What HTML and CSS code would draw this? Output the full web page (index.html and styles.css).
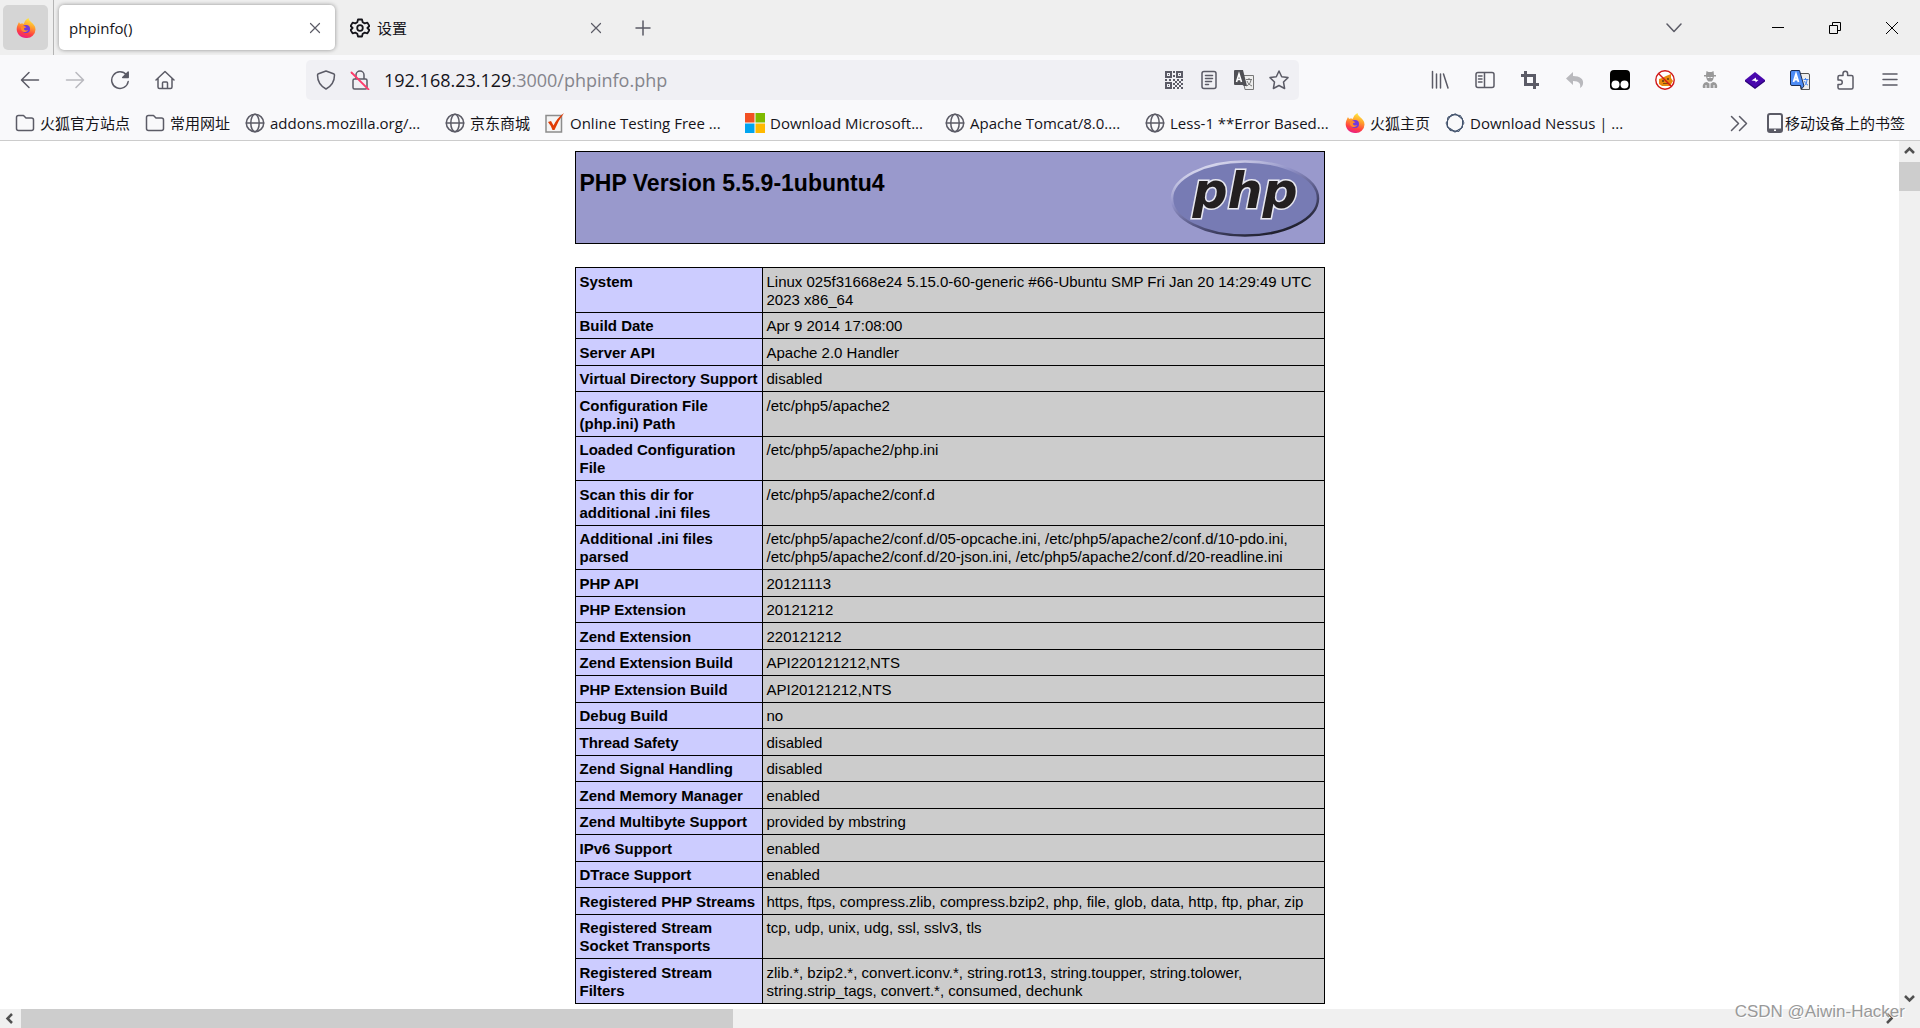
FILE: index.html
```html
<!DOCTYPE html>
<html lang="zh-CN">
<head>
<meta charset="utf-8">
<title>phpinfo()</title>
<link rel="stylesheet" href="styles.css">
</head>
<body>
<svg class="defs" aria-hidden="true">
  <defs>
    <linearGradient id="ff" x1="0.7" y1="0" x2="0.4" y2="1"><stop offset="0" stop-color="#fff044"/><stop offset=".4" stop-color="#ffa02c"/><stop offset=".75" stop-color="#ff4040"/><stop offset="1" stop-color="#e91d87"/></linearGradient>
    <linearGradient id="rim" x1="0.2" y1="0" x2="0.8" y2="1"><stop offset="0" stop-color="#e4e4f4"/><stop offset=".35" stop-color="#8f90c6"/><stop offset=".65" stop-color="#50517c"/><stop offset="1" stop-color="#15151c"/></linearGradient>
    <symbol id="firefox" viewBox="0 0 20 20"><path fill="url(#ff)" d="M12.500 0c.2 2 1.300 2.800 2.500 3.900 2.400 2 4.500 3.800 4.500 7.600A9 8.500 0 0 1 10 20C4.700 20 1 16 .7 11.500.6 8.500 1.800 6.500 3 4c.5 1 .8 1.500 1.500 2 .9-.7 2.500-.5 3.300 0 .7-2.400 2-4.600 4.700-6z"/><circle cx="10" cy="11" r="4" fill="#7139dc"/><path fill="#ff8a2a" d="M5 8.500c1.800-1 4.500-.7 5.500 1-2-.1-2.500.8-2.500 1.700 1 1.500 2.500 1.500 4 .8-1 2.500-4.800 2.700-6.300.5-.8-1.200-1-2.700-.7-4z"/></symbol>
    <symbol id="close" viewBox="0 0 12 12"><path d="M1.500 1.500l9 9M10.500 1.500l-9 9"/></symbol>
    <symbol id="folder" viewBox="0 0 20 20"><path d="M1.500 4.500v11q0 2 2 2h13q2 0 2-2V7q0-2-2-2h-5.500L8.500 2.500h-5q-2 0-2 2z"/></symbol>
    <symbol id="globe" viewBox="0 0 20 20"><circle cx="10" cy="10" r="8.700"/><ellipse cx="10" cy="10" rx="4.200" ry="8.700"/><path d="M1.300 10h17.400"/></symbol>
    <symbol id="back" viewBox="0 0 20 20"><path d="M18.500 10H2M9 2.500L1.500 10 9 17.500"/></symbol>
  </defs>
</svg>

<header class="chrome">
  <div class="tabs">
    <div class="pinbox"><button class="pinned" aria-label="Firefox"><svg class="i20"><use href="#firefox"/></svg></button></div>
    <div class="tab active"><span>phpinfo()</span><button class="x" aria-label="关闭"><svg class="i12 line thin"><use href="#close"/></svg></button></div>
    <div class="tab"><svg class="i20 gear" viewBox="0 0 20 20"><path d="M8 1.500h4l.7 2.800 2 1.100 2.700-.8 2 3.400-2 2 2 2-2 3.400-2.700-.8-2 1.100L12 18.500H8l-.7-2.800-2-1.100-2.700.8-2-3.400 2-2-2-2 2-3.400 2.700.8 2-1.100z"/><circle cx="10" cy="10" r="2.800"/></svg><span>设置</span><button class="x" aria-label="关闭"><svg class="i12 line thin"><use href="#close"/></svg></button></div>
    <button class="newtab" aria-label="新建标签页"><svg class="i16 line" viewBox="0 0 16 16"><path d="M8 1v14M1 8h14"/></svg></button>
    <div class="window">
      <button class="all" aria-label="列出所有标签页"><svg class="i16 line" viewBox="0 0 16 16"><path d="M1 4l7 7.500L15 4"/></svg></button>
      <button aria-label="最小化"><svg class="i12 sys" viewBox="0 0 12 12"><path d="M0 5.500h12"/></svg></button>
      <button aria-label="还原"><svg class="i12 sys" viewBox="0 0 12 12"><path d="M.5 3.500h8v8h-8zM3.500 3V.5h8v8H9"/></svg></button>
      <button aria-label="关闭窗口"><svg class="i12 sys" viewBox="0 0 12 12"><path d="M0 0l12 12M12 0L0 12"/></svg></button>
    </div>
  </div>

  <nav class="nav">
    <div class="navbtns">
      <button aria-label="后退"><svg class="i20 line"><use href="#back"/></svg></button>
      <button class="off" aria-label="前进"><svg class="i20 line" viewBox="0 0 20 20"><path d="M1.500 10H18M11 2.500l7.500 7.500-7.500 7.500"/></svg></button>
      <button aria-label="刷新"><svg class="i20 line" viewBox="0 0 20 20"><path d="M16.500 5A8.300 8.300 0 1 0 18.200 11.500"/><path class="solid" d="M18.200 2v5.500h-5.500z"/></svg></button>
      <button aria-label="主页"><svg class="i20 line" viewBox="0 0 20 20"><path d="M1 10l9-8.500 9 8.500M3 8.500V17q0 1.500 1.500 1.500h11q1.500 0 1.500-1.500V8.500M7.500 18.500v-5.500q0-1 1-1h3q1 0 1 1v5.500"/></svg></button>
    </div>
    <div class="urlbar">
      <svg class="i20 line" viewBox="0 0 20 20"><path d="M10 1l7.500 2.700q1 .4 1 1.300c0 7-3 11-8.500 14C4.500 16 1.500 12 1.500 5q0-.9 1-1.300z"/></svg>
      <svg class="i20 line" viewBox="0 0 20 20"><path d="M4.500 9h11q1.500 0 1.500 1.500v7q0 1.500-1.500 1.500h-11Q3 19 3 17.500v-7Q3 9 4.500 9zM6 9V5a4 4 0 0 1 8 0v4"/><path class="slash" d="M1.500 2.500l17 17"/></svg>
      <p class="url"><b>192.168.23.129</b>:3000/phpinfo.php</p>
      <div class="urlicons">
        <svg class="i20" viewBox="0 0 20 20"><g fill="none" stroke="#5b5b66" stroke-width="2"><path d="M2 2h5v5H2zM13 2h5v5h-5zM2 13h5v5H2z"/></g><path fill="#5b5b66" d="M4 4h1v1H4zM15 4h1v1h-1zM4 15h1v1H4zM9 1h2v2H9zM9 5h2v2H9zM1 9h2v2H1zM5 9h2v2H5zM9 9h2v2H9zM13 9h2v2h-2zM17 9h2v2h-2zM11 11h2v2h-2zM15 11h2v2h-2zM9 13h2v2H9zM13 13h2v2h-2zM17 13h2v2h-2zM11 15h2v2h-2zM15 15h2v2h-2zM9 17h2v2H9zM13 17h2v2h-2zM17 17h2v2h-2z"/></svg>
        <svg class="i20 line" viewBox="0 0 20 20"><path d="M5 1.500h10q2 0 2 2v13q0 2-2 2H5q-2 0-2-2v-13q0-2 2-2zM6.500 5.500h7M6.500 8.500h7M6.500 11.500h6M6.500 14.500h3"/></svg>
        <svg class="i20" viewBox="0 0 20 20"><path fill="#eee" stroke="#777" d="M8 5.500h11.500v14H11z"/><path fill="#505055" d="M1 0h8l4 16-3 0-1.500-1H1q-1 0-1-1V1q0-1 1-1z"/><path fill="none" stroke="#fff" stroke-width="1.600" d="M2.500 12L5 4l2.500 8M3.500 9.500h3"/><path fill="none" stroke="#777" d="M12 9.500h6M15 8v1.500M17 10c-.5 3-2 5-4.500 6M13 11c1 2.500 2 3.500 5 5"/></svg>
        <svg class="i20 line" viewBox="0 0 20 20"><path d="M10 1l2.700 5.700 6.300.9-4.500 4.400 1.100 6.500L10 15.500l-5.600 3 1.100-6.500L1 7.600l6.300-.9z"/></svg>
      </div>
    </div>
    <div class="tools">
      <button aria-label="书库"><svg class="i20 line" viewBox="0 0 20 20"><path d="M2.500 1.500v16.500M6.500 4v14M10.500 4v14M13.500 4l4.500 14"/></svg></button>
      <button aria-label="侧栏"><svg class="i20 line" viewBox="0 0 20 20"><path d="M3 2.500h14q2 0 2 2v11q0 2-2 2H3q-2 0-2-2v-11q0-2 2-2zM9.500 2.500v15M3.500 6H7M3.500 9H7M3.500 12H7"/></svg></button>
      <button aria-label="截图"><svg class="i20" viewBox="0 0 20 20"><path fill="none" stroke="#5b5b66" stroke-width="3" d="M5.500 1v13.500H19M1 5.500h13.500V19"/></svg></button>
      <button aria-label="撤销"><svg class="i20" viewBox="0 0 20 20"><path fill="#b9b9bd" d="M8 2v4c7 0 11 3 10 8-.4 2-1.500 3-3 4 1-4-.5-7-7-7v4L1 8.500z"/></svg></button>
      <button aria-label="Tampermonkey"><svg class="i20" viewBox="0 0 20 20"><rect width="20" height="20" rx="4"/><circle cx="5.500" cy="14.500" r="4" fill="#fff"/><circle cx="14.500" cy="14.500" r="4" fill="#fff"/></svg></button>
      <button aria-label="拦截"><svg class="i20" viewBox="0 0 20 20"><circle cx="10" cy="10" r="9" fill="#fff"/><path fill="#e8890c" d="M4 9l3-1 4-2 5-2 0 4 2 3-3 5H7l-3-2z"/><path fill="#7d4c12" d="M7 10h2v2H7zM12 8h2v2h-2zM8 13h6v1H8z"/><circle cx="10" cy="10" r="9.200" fill="none" stroke="#d01818" stroke-width="1.400"/><path stroke="#d01818" stroke-width="1.400" d="M3.500 3.500l13 13"/></svg></button>
      <button aria-label="隐私"><svg class="i20" viewBox="0 0 20 20"><path fill="#999" d="M6.500 1l2 1h3l2-1 .5 4h2v1.500h-2L13 10l-1.500 1.500h-3L7 10 6 6.500H4V5h2zM3 18c-1-3 1-6 4-6l3 2 3-2c3 0 5 3 4 6z"/><path stroke="#fafafe" fill="none" d="M7.500 7.500h2M10.500 7.500h2M6 15v4M14 15v4M10 14v5"/></svg></button>
      <button aria-label="钻石"><svg class="i20" viewBox="0 0 20 20"><path fill="#2c0378" d="M0 10v1.500L10 19l10-7.500V10z"/><path fill="#4908ad" d="M10 2l10 8-10 7.500L0 10z"/><path fill="#fff" d="M6.500 10.500l4.500-3v2l2.500.5-3 2.500v-1.500z"/></svg></button>
      <button aria-label="翻译"><svg class="i20" viewBox="0 0 20 20"><path fill="#eee" stroke="#555" d="M9 3.500h9q1.500 0 1.500 1.500v14.500H11z"/><path fill="#4c8bf5" stroke="#1d2c50" d="M2 .5h7.500L14 16l-2.500 3-1-3.500H2Q.5 15.500.5 14V2Q.5.5 2 .5z"/><path fill="none" stroke="#fff" stroke-width="1.800" d="M3.500 12L6 4l2.500 8M4.500 9.500h3"/><path fill="none" stroke="#4285f4" d="M13.500 9.500h5M15.500 8v1.500M17 10c-.5 3-1 4-2 5M14.500 11c1 2.500 2 3.500 3.500 4"/></svg></button>
      <button aria-label="扩展"><svg class="i20 line" viewBox="0 0 20 20"><path d="M3 8.500V7q0-1.500 1.500-1.500H8V3.500a2.300 2.300 0 0 1 4.600 0v2h3.900q1.500 0 1.500 1.500v10.500q0 1.500-1.500 1.500h-12Q3 19 3 17.500V14.500h2a2 2 0 0 0 0-4.500H3z"/></svg></button>
      <button aria-label="菜单"><svg class="i20 line" viewBox="0 0 20 20"><path d="M3 4h14M3 9.500h14M3 15h14"/></svg></button>
    </div>
  </nav>

  <div class="marks">
    <a class="wide" href="#"><svg class="i20 line"><use href="#folder"/></svg>火狐官方站点</a>
    <a class="short" href="#"><svg class="i20 line"><use href="#folder"/></svg>常用网址</a>
    <a href="#"><svg class="i20 line"><use href="#globe"/></svg>addons.mozilla.org/...</a>
    <a class="short" href="#"><svg class="i20 line"><use href="#globe"/></svg>京东商城</a>
    <a href="#"><svg class="i20" viewBox="0 0 20 20"><path fill="#f4f4f4" stroke="#8c8c8c" stroke-width="1.500" d="M1 2.500h15.500v16.500H1z"/><path fill="#e03c06" d="M3 9l3-1 2.500 4.500Q12 5 19 0 13 8 9.500 17H7.500Q6 12.500 3 9z"/></svg>Online Testing Free ...</a>
    <a href="#"><svg class="i20" viewBox="0 0 20 20"><path fill="#f25022" d="M0 0h9.500v9.500H0z"/><path fill="#7fba00" d="M10.500 0H20v9.500h-9.500z"/><path fill="#00a4ef" d="M0 10.500h9.500V20H0z"/><path fill="#ffb900" d="M10.500 10.500H20V20h-9.500z"/></svg>Download Microsoft...</a>
    <a href="#"><svg class="i20 line"><use href="#globe"/></svg>Apache Tomcat/8.0....</a>
    <a href="#"><svg class="i20 line"><use href="#globe"/></svg>Less-1 **Error Based...</a>
    <a class="short" href="#"><svg class="i20"><use href="#firefox"/></svg>火狐主页</a>
    <a href="#"><svg class="i20" viewBox="0 0 20 20"><g fill="none" stroke="#44546e"><path d="M6.500 1.500l9 1L19 10l-5 8.500-9-1L1 10z"/><path d="M10 .8l7.500 4.500v9L10 19.200l-7.500-4.700v-9z"/><path d="M3 4l8-3 7 6-1 8-7 3.500-8-5z"/></g></svg>Download Nessus | ...</a>
    <button class="more" aria-label="更多书签"><svg class="i20 line" viewBox="0 0 20 20"><path d="M2.500 3.500l7 7-7 7M10.500 3.500l7 7-7 7"/></svg></button>
    <a class="mobile" href="#"><svg class="i20" viewBox="0 0 20 20"><path fill="none" stroke="#5b5b66" stroke-width="2" d="M5 1h10q2 0 2 2v14q0 2-2 2H5q-2 0-2-2V3q0-2 2-2z"/><path fill="#5b5b66" d="M3 15.500h14V19H3z"/><path fill="#fff" d="M9 16.500h2v1.500H9z"/></svg>移动设备上的书签</a>
  </div>
</header>

<div class="view">
  <main class="page">
    <section class="banner">
      <h1>PHP Version 5.5.9-1ubuntu4</h1>
      <svg class="logo" viewBox="0 0 150 80" role="img" aria-label="PHP"><ellipse cx="75" cy="38.500" rx="73" ry="37" fill="#777bb4" stroke="url(#rim)" stroke-width="2.500"/><text x="75" y="48" text-anchor="middle" class="logotext">php</text></svg>
    </section>
    <table class="info">
      <tr><th>System</th><td>Linux 025f31668e24 5.15.0-60-generic #66-Ubuntu SMP Fri Jan 20 14:29:49 UTC<br>2023 x86_64</td></tr>
      <tr><th>Build Date</th><td>Apr 9 2014 17:08:00</td></tr>
      <tr><th>Server API</th><td>Apache 2.0 Handler</td></tr>
      <tr><th>Virtual Directory Support</th><td>disabled</td></tr>
      <tr><th>Configuration File<br>(php.ini) Path</th><td>/etc/php5/apache2</td></tr>
      <tr><th>Loaded Configuration<br>File</th><td>/etc/php5/apache2/php.ini</td></tr>
      <tr><th>Scan this dir for<br>additional .ini files</th><td>/etc/php5/apache2/conf.d</td></tr>
      <tr><th>Additional .ini files<br>parsed</th><td>/etc/php5/apache2/conf.d/05-opcache.ini, /etc/php5/apache2/conf.d/10-pdo.ini,<br>/etc/php5/apache2/conf.d/20-json.ini, /etc/php5/apache2/conf.d/20-readline.ini</td></tr>
      <tr><th>PHP API</th><td>20121113</td></tr>
      <tr><th>PHP Extension</th><td>20121212</td></tr>
      <tr><th>Zend Extension</th><td>220121212</td></tr>
      <tr><th>Zend Extension Build</th><td>API220121212,NTS</td></tr>
      <tr><th>PHP Extension Build</th><td>API20121212,NTS</td></tr>
      <tr><th>Debug Build</th><td>no</td></tr>
      <tr><th>Thread Safety</th><td>disabled</td></tr>
      <tr><th>Zend Signal Handling</th><td>disabled</td></tr>
      <tr><th>Zend Memory Manager</th><td>enabled</td></tr>
      <tr><th>Zend Multibyte Support</th><td>provided by mbstring</td></tr>
      <tr><th>IPv6 Support</th><td>enabled</td></tr>
      <tr><th>DTrace Support</th><td>enabled</td></tr>
      <tr><th>Registered PHP Streams</th><td>https, ftps, compress.zlib, compress.bzip2, php, file, glob, data, http, ftp, phar, zip</td></tr>
      <tr><th>Registered Stream<br>Socket Transports</th><td>tcp, udp, unix, udg, ssl, sslv3, tls</td></tr>
      <tr><th>Registered Stream<br>Filters</th><td>zlib.*, bzip2.*, convert.iconv.*, string.rot13, string.toupper, string.tolower,<br>string.strip_tags, convert.*, consumed, dechunk</td></tr>
    </table>
  </main>
  <div class="vbar"><svg class="arrow" viewBox="0 0 21 21"><path d="M6 12l4.500-4.500L15 12"/></svg><div class="vthumb"></div><svg class="arrow last" viewBox="0 0 21 21"><path d="M6 8l4.500 4.500L15 8"/></svg></div>
</div>
<div class="hbar"><svg class="arrow" viewBox="0 0 21 21"><path d="M12 6l-4.500 4.500L12 15"/></svg><div class="hthumb"></div><svg class="arrow last" viewBox="0 0 21 21"><path d="M9 6l4.500 4.500L9 15"/></svg></div>
<div class="watermark">CSDN @Aiwin-Hacker</div>
</body>
</html>
```
FILE: styles.css
```css
* { box-sizing: border-box; }
body {
  margin: 0;
  height: 100vh;
  display: flex;
  flex-direction: column;
  overflow: hidden;
  position: relative;
  background: #fff;
  color: #15141a;
  font: 15px/20px "Open Sans", "Noto Sans CJK SC", sans-serif;
}
button { border: 0; padding: 0; background: none; display: flex; align-items: center; justify-content: center; font: inherit; color: inherit; }
a { color: inherit; text-decoration: none; }
svg { flex: none; display: block; }
.defs { position: absolute; width: 0; height: 0; }
.i20 { width: 20px; height: 20px; }
.i16 { width: 16px; height: 16px; }
.i12 { width: 12px; height: 12px; }
.line { fill: none; stroke: #5b5b66; stroke-width: 1.5; stroke-linecap: round; stroke-linejoin: round; }
.line.thin { stroke-width: 1.2; }
.line .solid { fill: #5b5b66; }
.line .slash { stroke: #ff3b6b; stroke-width: 1.8; }
.sys { fill: none; stroke: #000; stroke-width: 1; }
.gear { fill: none; stroke: #15141a; stroke-width: 1.8; stroke-linejoin: round; }

.tabs { display: flex; align-items: center; height: 55px; padding-left: 3px; background: #efefef; }
.pinbox { display: flex; align-items: center; width: 51px; height: 55px; border-right: 1px solid #b4b4b4; }
.pinned { width: 45px; height: 45px; border-radius: 5px; background: #d5d5d5; }
.tab { display: flex; align-items: center; width: 276px; height: 45px; margin-left: 5px; padding: 0 10px; gap: 7px; }
.tab.active { background: #fff; border-radius: 5px; box-shadow: 0 0 4px rgba(0, 0, 0, .4); }
.tab .x { margin-left: auto; width: 20px; height: 20px; }
.newtab { width: 40px; height: 45px; margin-left: 7px; }
.window { display: flex; margin-left: auto; }
.window button { width: 57px; height: 53px; }
.window .all { width: 50px; margin-right: 50px; }

.nav { display: flex; align-items: center; height: 50px; background: #f9f9fb; }
.navbtns { display: flex; padding-left: 7px; flex: none; }
.navbtns button, .tools button { width: 45px; height: 40px; }
.off { opacity: .4; }
.urlbar { flex: 1; display: flex; align-items: center; height: 40px; margin: 0 118px 0 119px; padding: 0 10px; gap: 14px; border-radius: 5px; background: #f0f0f4; }
.url { flex: 1; margin: 0; font-size: 18px; line-height: 24px; color: #85858c; white-space: nowrap; }
.url b { font-weight: 400; color: #15141a; }
.urlicons { display: flex; gap: 15px; }
.tools { display: flex; flex: none; padding-right: 8px; }

.marks { display: flex; align-items: center; height: 36px; padding: 0 15px; background: #f9f9fb; border-bottom: 1px solid #ccc; white-space: nowrap; }
.marks a { display: flex; align-items: center; gap: 5px; width: 200px; }
.marks .wide { width: 130px; }
.marks .short { width: 100px; }
.marks .more { margin-left: auto; margin-right: 16px; }
.marks .mobile { width: auto; gap: 0; }

.view { flex: 1; display: flex; min-height: 0; }
.page { flex: 1; overflow: hidden; padding-top: 10px; color: #000; font-family: "Liberation Sans", Arial, sans-serif; }
.banner { display: flex; justify-content: space-between; width: 750px; height: 93px; margin: 0 auto 23px; padding: 8px 4px; border: 1px solid #000; background: #99c; }
.banner h1 { margin: 9px 0 0; font-size: 23px; line-height: 28px; }
.logo { width: 150px; height: 80px; overflow: visible; }
.logotext { font: italic bold 49px "DejaVu Sans", sans-serif; fill: #231f20; stroke: #e8e8f0; stroke-width: 3px; paint-order: stroke; }
.info { width: 750px; margin: 0 auto; border-collapse: collapse; table-layout: fixed; font-size: 15px; line-height: 18px; }
.info th, .info td { border: 1px solid #000; padding: 4px 3px 3px 4px; text-align: left; vertical-align: top; white-space: nowrap; }
.info tr:nth-child(odd) > * { padding-top: 5px; }
.info th { width: 187px; background: #ccf; }
.info td { background: #ccc; }

.vbar { display: flex; flex-direction: column; width: 21px; background: #f0f0f0; }
.vthumb { height: 29px; background: #cdcdcd; }
.hbar { display: flex; align-items: center; height: 19px; padding-right: 21px; background: #f0f0f0; }
.hthumb { width: 37.5%; height: 19px; background: #cdcdcd; }
.arrow { width: 21px; height: 21px; fill: none; stroke: #505050; stroke-width: 2.5; }
.vbar .last { margin-top: auto; }
.hbar .last { margin-left: auto; }
.watermark { position: absolute; right: 15px; bottom: 5px; font: 17px/22px "Liberation Sans", sans-serif; color: #999; text-shadow: 1px 1px 0 #fff; }
```
